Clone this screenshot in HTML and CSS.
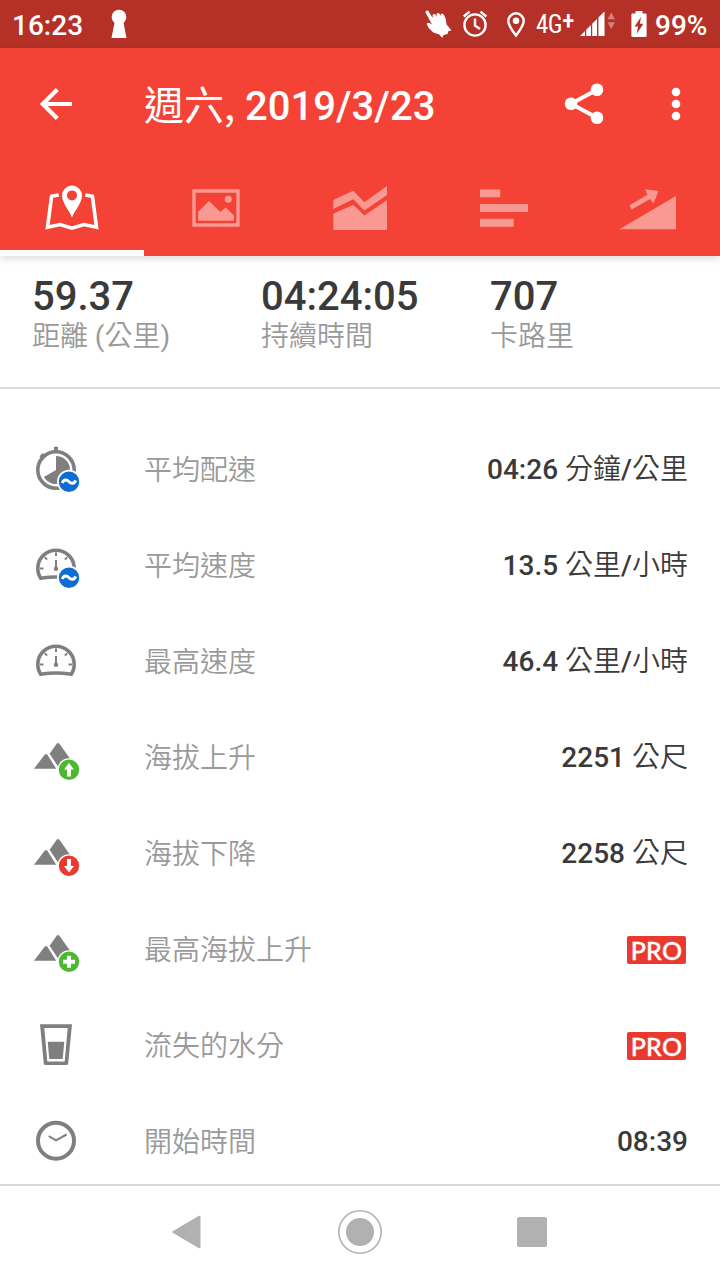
FILE: index.html
```html
<!DOCTYPE html>
<html lang="zh-Hant">
<head>
  <meta charset="UTF-8" />
  <meta name="viewport" content="width=device-width, initial-scale=1.0"/>
  <title>週六, 2019/3/23</title>
  <link rel="stylesheet" href="styles.css">
</head>
<body>
  <div class="statusbar">
    <span class="clock">16:23</span>
    <svg class="keyhole" width="16" height="30" viewBox="0 0 16 30"><circle cx="8" cy="8" r="7.3"/><path d="M4 11h8l3.5 18h-15z"/></svg>
    <svg class="hand" width="27" height="30" viewBox="0 0 27 30"><path d="M.5 3.500Q.3 1.300 2 1.400L3.400 2L7.800 9L7.600 6Q8.800 4.300 10.400 5.600L11.600 7.800L11.500 5Q13 3.200 14.700 5L15.800 7L15.800 5Q17.500 3.600 19 6L20.600 9.500L21.600 15.500L26.500 21.500L23.500 22L22.500 25L18.500 26L17.300 29L14.300 25.500L8.300 23.500L3.700 19L1.600 14.800Q2.800 13 5 14.200L7 15.500z"/></svg>
    <svg class="alarm" width="26" height="28" viewBox="0 0 26 28"><g fill="none" stroke="#fff" stroke-width="2.4"><circle cx="13" cy="16" r="10.600"/><path d="M1.700 7.500l5.800-4.800M24.300 7.500l-5.800-4.800M13 9.500V16.500l5 3.400"/></g></svg>
    <svg class="pin" width="18" height="26" viewBox="0 0 18 26"><path fill="none" stroke="#fff" stroke-width="2.4" d="M9 23.600C5.500 19 1.300 13.500 1.300 9a7.700 7.700 0 0 1 15.400 0C16.700 13.500 12.500 19 9 23.600z"/><circle cx="9" cy="8.700" r="3.300"/></svg>
    <span class="network">4G<b>+</b></span>
    <svg class="signal" width="36" height="26" viewBox="0 0 36 26"><path d="M0 25L5 20V25zM6.200 18.800L11 14V25H6.200zM12.200 12.800L17 8V25H12.200zM18.400 6.600L24.500.500V25H18.400z"/><path class="faint" d="M27.500 8.200L31.200 1.500L35 8.200zM27.500 11.200L31.200 18L35 11.200z"/></svg>
    <svg class="battery" width="16" height="26" viewBox="0 0 16 26"><path fill-rule="evenodd" d="M4.500 0h7v2.500H14.500Q15.600 2.500 15.600 3.600V25Q15.600 26 14.500 26H1.500Q.400 26 .400 25V3.600Q.400 2.500 1.500 2.500H4.500zM10 6L3.600 15.500H7L5.800 22.800L12.400 12.800H8.800z"/></svg>
    <span class="percent">99%</span>
  </div>

  <header class="header">
    <div class="toolbar">
      <svg class="back" width="34" height="34" viewBox="0 0 34 34"><path fill="none" stroke="#fff" stroke-width="4.200" d="M33 17H5M18.300 2.500L3.800 17L18.300 31.500"/></svg>
      <h1><span>週六,</span> 2019/3/23</h1>
      <svg class="share" width="42" height="42" viewBox="0 0 42 42"><path fill="none" stroke="#fff" stroke-width="4" d="M34 6.700L8 20.700L34 34.700"/><circle cx="8" cy="20.700" r="6.300"/><circle cx="34" cy="6.800" r="6.300"/><circle cx="34" cy="34.700" r="6.300"/></svg>
      <svg class="more" width="10" height="34" viewBox="0 0 10 34"><circle cx="5" cy="5" r="4.300"/><circle cx="5" cy="17" r="4.300"/><circle cx="5" cy="29" r="4.300"/></svg>
    </div>
    <nav class="tabs">
      <div class="tab active">
        <svg viewBox="0 0 60 56"><path fill="none" stroke="#fff" stroke-width="3.600" d="M16.800 15L9.600 16.200L5.500 47.200L18 44.500L30 48.200L42 44.500L54.500 47.200L50.400 16.200L43.200 15"/><path fill-rule="evenodd" d="M30 37.500C27 30 20 23 20 15.600a10 10 0 0 1 20 0C40 23 33 30 30 37.500zM30 10.400a5 5 0 1 0 0 10a5 5 0 1 0 0-10z"/></svg>
      </div>
      <div class="tab">
        <svg viewBox="0 0 60 56"><path fill-rule="evenodd" d="M6.300 9.300H53.700V46.700H6.300zM9.700 12.700V43.300H50.300V12.700z"/><path d="M12.200 40.700V31.700L23 21L34.300 32L39.700 27.600L48 35.600V40.700z"/><circle cx="42.200" cy="19.300" r="3.500"/></svg>
      </div>
      <div class="tab">
        <svg viewBox="0 0 60 56"><path d="M3.300 20L23.300 10.700L34.300 22.300L57 6V15L34.300 30.500L23.300 19.300L3.300 29zM3.300 33.700L23.300 24.700L34.300 35.500L57 20V50H3.300z"/></svg>
      </div>
      <div class="tab">
        <svg viewBox="0 0 60 56"><path d="M6 9.500H26.200V17.300H6zM6 24H54V32H6zM6 38.700H39.700V46.800H6z"/></svg>
      </div>
      <div class="tab">
        <svg viewBox="0 0 60 56"><path d="M1.300 49.300L58 16V49.300zM11.500 25.300L29.500 14.800L27 9.200L40.500 11L35.500 23.500L32 19L13.800 29.500z"/></svg>
      </div>
    </nav>
  </header>

  <section class="summary">
    <div class="stat"><strong>59.37</strong><span>距離 <b>(</b>公里<b>)</b></span></div>
    <div class="stat"><strong>04:24:05</strong><span>持續時間</span></div>
    <div class="stat"><strong>707</strong><span>卡路里</span></div>
  </section>

  <main class="details">
    <div class="row">
      <svg viewBox="0 0 48 56"><circle class="line" cx="24" cy="28" r="18.200"/><path d="M22 4.700h4V10h-4zM7.400 14.300L10.800 10.900L14 14.100L10.500 17.500z"/><path d="M24 28V14A14 14 0 1 1 11.900 35z"/><circle class="gap" cx="37" cy="39.700" r="12"/><circle class="blue" cx="37" cy="39.700" r="10.200"/><path class="wave" d="M30.200 41C32 37 34.800 37.500 37 39.700S42 42.300 43.800 38.400"/></svg>
      <span class="label">平均配速</span>
      <span class="value">04:26 <i>分鐘</i>/<i>公里</i></span>
    </div>
    <div class="row">
      <svg viewBox="0 0 48 56"><path class="line" d="M8.700 40.300A18.200 18.200 0 1 1 39.300 40.300Q24 37.800 8.700 40.300z"/><path class="tick" d="M24 14.500v3.500M8 30.500h3.500M40 30.500h-3.500M12.800 19.300l2.300 2.300M35.200 19.300l-2.300 2.300"/><path class="tick" d="M24 22v10"/><circle cx="24" cy="30.800" r="2.200"/><circle class="gap" cx="37" cy="39.700" r="12"/><circle class="blue" cx="37" cy="39.700" r="10.200"/><path class="wave" d="M30.200 41C32 37 34.800 37.500 37 39.700S42 42.300 43.800 38.400"/></svg>
      <span class="label">平均速度</span>
      <span class="value">13.5 <i>公里</i>/<i>小時</i></span>
    </div>
    <div class="row">
      <svg viewBox="0 0 48 56"><path class="line" d="M8.700 40.300A18.200 18.200 0 1 1 39.300 40.300Q24 37.800 8.700 40.300z"/><path class="tick" d="M24 14.500v3.500M8 30.500h3.500M40 30.500h-3.500M12.800 19.300l2.300 2.300M35.200 19.300l-2.300 2.300"/><path class="tick" d="M24 22v10"/><circle cx="24" cy="30.800" r="2.200"/></svg>
      <span class="label">最高速度</span>
      <span class="value">46.4 <i>公里</i>/<i>小時</i></span>
    </div>
    <div class="row">
      <svg viewBox="0 0 48 56"><path d="M2 38.700L12.600 24.800Q14 23.200 15.400 24.800L24.200 38.700zM17.600 23.700L24.600 13.800Q26 12.200 27.400 13.800L40 31.500L26 36.500z"/><circle class="gap" cx="37" cy="39.700" r="11.500"/><circle class="green" cx="37" cy="39.700" r="10.200"/><path class="mark" d="M37 33L42 39.500H39V46.500H35V39.500H32z"/></svg>
      <span class="label">海拔上升</span>
      <span class="value">2251 <i>公尺</i></span>
    </div>
    <div class="row">
      <svg viewBox="0 0 48 56"><path d="M2 38.700L12.600 24.800Q14 23.200 15.400 24.800L24.200 38.700zM17.600 23.700L24.600 13.800Q26 12.200 27.400 13.800L40 31.500L26 36.500z"/><circle class="gap" cx="37" cy="39.700" r="11.500"/><circle class="red" cx="37" cy="39.700" r="10.200"/><path class="mark" d="M37 46.500L42 40H39V33H35V40H32z"/></svg>
      <span class="label">海拔下降</span>
      <span class="value">2258 <i>公尺</i></span>
    </div>
    <div class="row">
      <svg viewBox="0 0 48 56"><path d="M2 38.700L12.600 24.800Q14 23.200 15.400 24.800L24.200 38.700zM17.600 23.700L24.600 13.800Q26 12.200 27.400 13.800L40 31.500L26 36.500z"/><circle class="gap" cx="37" cy="39.700" r="11.500"/><circle class="green" cx="37" cy="39.700" r="10.200"/><path class="mark" d="M35 33.700h4v4h4v4h-4v4h-4v-4h-4v-4h4z"/></svg>
      <span class="label">最高海拔上升</span>
      <span class="pro">PRO</span>
    </div>
    <div class="row">
      <svg viewBox="0 0 48 56"><path fill-rule="evenodd" d="M8 6.300H40L36.200 45.500Q36 47 34.500 47H13.500Q12 47 11.800 45.500zM12.300 10L15.300 43.500H32.700L35.700 10z"/><path d="M15.700 23.700H32.300L30.700 41H17.300z"/></svg>
      <span class="label">流失的水分</span>
      <span class="pro">PRO</span>
    </div>
    <div class="row">
      <svg viewBox="0 0 48 56"><circle cx="24" cy="26.700" r="18" fill="none" stroke="#7f7f7f" stroke-width="4"/><path class="tick" d="M16.800 22.200L24 26.300L34.600 20.500"/></svg>
      <span class="label">開始時間</span>
      <span class="value">08:39</span>
    </div>
  </main>

  <footer class="navbar">
    <div><svg class="nav-back" width="30" height="34" viewBox="0 0 30 34"><path d="M28 .800Q29.500.200 29.500 1.800V32.200Q29.500 33.800 28 33.200L2 18Q.400 17 2 16z"/></svg></div>
    <div><svg width="44" height="44" viewBox="0 0 44 44"><circle cx="22" cy="22" r="21.200" fill="none" stroke="#b1b1b1" stroke-width="1.600"/><circle cx="22" cy="22" r="14"/></svg></div>
    <div><svg width="30" height="30" viewBox="0 0 30 30"><rect width="30" height="30" rx="2.500"/></svg></div>
  </footer>
</body>
</html>
```
FILE: styles.css
```css
* {
  box-sizing: border-box;
}

body {
  margin: 0;
  width: 720px;
  height: 1280px;
  display: flex;
  flex-direction: column;
  overflow: hidden;
  background: #fff;
  color: #3a3a3a;
  font-family: Roboto, "Noto Sans CJK TC", sans-serif;
}

svg {
  display: block;
  flex: none;
}

/* status bar */
.statusbar {
  display: flex;
  align-items: flex-start;
  height: 48px;
  padding-left: 12px;
  background: #b53127;
  color: #fff;
  font-size: 28px;
  font-weight: 500;
  line-height: 51px;
  white-space: nowrap;
  flex: none;
}

.statusbar svg {
  fill: #fff;
}

.clock {
  width: 99px;
}

.keyhole {
  margin-top: 9px;
}

.hand {
  margin: 9px 0 0 298px;
}

.alarm {
  margin: 9px 0 0 10px;
}

.pin {
  margin: 12px 0 0 19px;
}

.network {
  width: 54px;
  padding-left: 11px;
  font-family: "Roboto Condensed", Roboto, sans-serif;
  font-size: 25px;
  font-weight: 400;
  line-height: 49px;
  letter-spacing: -0.5px;
}

.network b {
  font-size: 25px;
  font-weight: 500;
  line-height: 1;
  vertical-align: 4px;
}

.signal {
  margin: 11px 0 0 1px;
}

.faint {
  opacity: 0.4;
}

.battery {
  margin: 11px 0 0 15px;
}

.percent {
  margin-left: 8px;
}

/* header */
.header {
  height: 208px;
  background: #f44336;
  box-shadow: 0 2px 8px rgba(0, 0, 0, 0.16);
  flex: none;
}

.toolbar {
  display: flex;
  align-items: center;
  height: 112px;
  padding-left: 39px;
}

.toolbar svg {
  fill: #fff;
}

h1 {
  width: 418px;
  margin: 6px 0 0 71px;
  color: #fff;
  font-size: 40px;
  font-weight: 500;
  line-height: 56px;
  white-space: nowrap;
}

h1 span {
  font-family: "Noto Sans CJK TC", sans-serif;
  font-weight: 400;
  line-height: 1;
}

.share {
  margin-left: 1px;
}

.more {
  margin-left: 66px;
}

.tabs {
  display: flex;
}

.tab {
  display: flex;
  justify-content: center;
  width: 144px;
  height: 96px;
  padding-top: 20px;
}

.tab svg {
  width: 60px;
  height: 56px;
  fill: #fff;
  opacity: 0.46;
}

.tab.active {
  border-bottom: 6px solid #fff;
}

.tab.active svg {
  opacity: 1;
}

/* summary */
.summary {
  display: flex;
  height: 133px;
  padding: 17px 0 0 32px;
  border-bottom: 2px solid #dcdcdc;
  flex: none;
}

.stat {
  width: 229px;
}

.stat strong {
  display: block;
  font-size: 40px;
  font-weight: 500;
  line-height: 48px;
}

.stat span {
  display: block;
  color: #9a9a9a;
  font-size: 28px;
  font-weight: 350;
  line-height: 32px;
}

.stat b {
  font-weight: 400;
}

/* details */
.details {
  height: 795px;
  padding-top: 33px;
  overflow: hidden;
  flex: none;
}

.row {
  display: flex;
  align-items: center;
  height: 96px;
  padding: 0 32px;
  font-size: 28px;
  line-height: 40px;
}

.row svg {
  width: 48px;
  height: 56px;
  fill: #7f7f7f;
}

.label {
  margin: 1px 0 0 64px;
  color: #9a9a9a;
  font-weight: 350;
}

.value {
  margin: 0 0 0 auto;
  font-weight: 500;
}

.value i {
  font-style: normal;
  font-weight: 350;
}

.pro {
  width: 59px;
  height: 28px;
  margin: 0 2px 1px auto;
  border-radius: 2px;
  background: #ea3a2f;
  color: #fff;
  font-family: Lato, sans-serif;
  font-size: 25px;
  font-weight: 500;
  line-height: 28px;
  letter-spacing: 0.3px;
  text-align: center;
  -webkit-text-stroke: 0.4px #fff;
}

.row .line {
  fill: none;
  stroke: #7f7f7f;
  stroke-width: 3.6;
}

.row .tick {
  fill: none;
  stroke: #7f7f7f;
  stroke-width: 2;
}

.row .wave {
  fill: none;
  stroke: #fff;
  stroke-width: 3;
}

.row .gap,
.row .mark {
  fill: #fff;
}

.row .blue {
  fill: #0d6dd0;
}

.row .green {
  fill: #4cb831;
}

.row .red {
  fill: #ea3a2f;
}

/* navigation buttons */
.navbar {
  display: flex;
  justify-content: center;
  height: 96px;
  box-shadow: inset 0 2px #d8d8d8;
  flex: none;
}

.navbar div {
  display: flex;
  align-items: center;
  justify-content: center;
  width: 172px;
}

.navbar svg {
  fill: #b1b1b1;
}

.nav-back {
  margin-right: 4px;
}
```
